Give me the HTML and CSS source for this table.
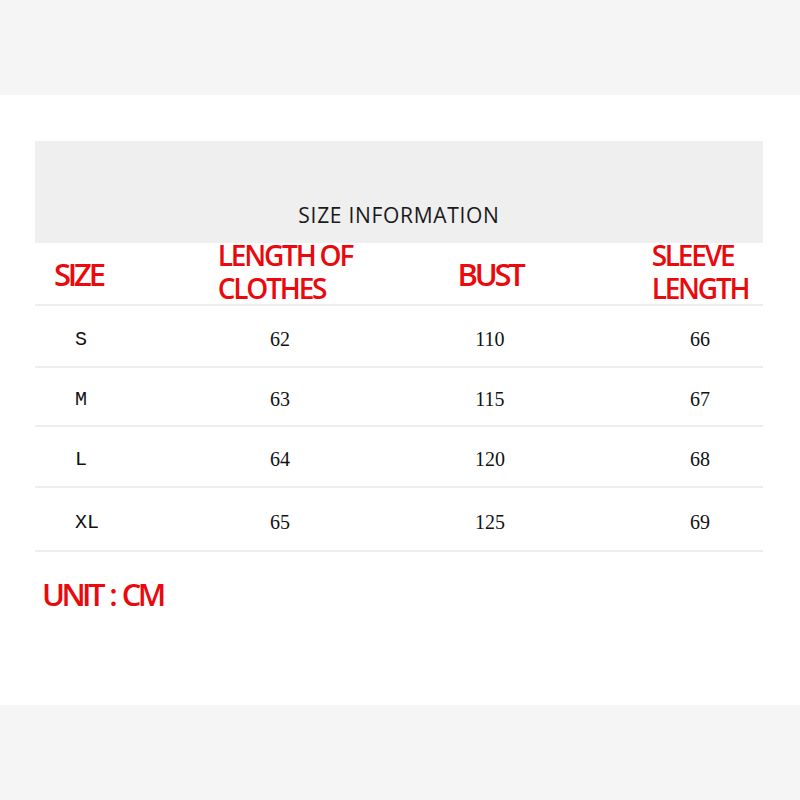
FILE: index.html
```html
<!DOCTYPE html>
<html>
<head>
<meta charset="utf-8">
<link rel="stylesheet" href="styles.css">
</head>
<body>
<div class="band"></div>
<main class="sheet">
  <div class="title">SIZE INFORMATION</div>
  <div class="table">
    <div class="row head">
      <div class="c c1"><span class="red big">SIZE</span></div>
      <div class="c c2"><span class="red two"><span class="ln">LENGTH OF</span><span class="ln">CLOTHES</span></span></div>
      <div class="c c3"><span class="red big">BUST</span></div>
      <div class="c c4"><span class="red two"><span class="ln">SLEEVE</span><span class="ln">LENGTH</span></span></div>
    </div>
    <div class="row body r1">
      <div class="c c1 sz">S</div><div class="c c2 num">62</div><div class="c c3 num">110</div><div class="c c4 num">66</div>
    </div>
    <div class="row body r2">
      <div class="c c1 sz">M</div><div class="c c2 num">63</div><div class="c c3 num">115</div><div class="c c4 num">67</div>
    </div>
    <div class="row body r3">
      <div class="c c1 sz">L</div><div class="c c2 num">64</div><div class="c c3 num">120</div><div class="c c4 num">68</div>
    </div>
    <div class="row body r4">
      <div class="c c1 sz">XL</div><div class="c c2 num">65</div><div class="c c3 num">125</div><div class="c c4 num">69</div>
    </div>
  </div>
  <div class="unit">UNIT : CM</div>
</main>
<div class="band"></div>
</body>
</html>
```

FILE: styles.css
```css
html, body {
  margin: 0;
  padding: 0;
  background: #ffffff;
}
body {
  width: 800px;
  height: 800px;
  overflow: hidden;
  display: flex;
  flex-direction: column;
}
.band {
  height: 95px;
  background: #f6f5f5;
}
.sheet {
  height: 610px;
  box-sizing: border-box;
  padding: 46px 37px 0 35px;
  background: #ffffff;
}
.title {
  height: 102px;
  background: #efefef;
  box-sizing: border-box;
  padding-top: 60px;
  text-align: center;
  font-family: "Open Sans", sans-serif;
  font-size: 21px;
  letter-spacing: 0.7px;
  line-height: 28px;
  color: #1a1a1a;
}
.table {
  display: flex;
  flex-direction: column;
}
.row {
  display: grid;
  grid-template-columns: 140px 210px 210px 168px;
  align-items: center;
  border-bottom: 2px solid #eeeeee;
  box-sizing: border-box;
}
.head { height: 63px; align-items: start; }
.body { padding-top: 6px; }
.r1 { height: 62px; }
.r2 { height: 59px; }
.r3 { height: 61px; }
.r4 { height: 64px; }
.c { text-align: center; }
.c1 { text-align: left; }
.c4 { padding-left: 42px; }
.head .c1 { padding-left: 19px; }
.red {
  display: inline-block;
  text-align: left;
  color: #ea0a0e;
  font-family: "Open Sans", sans-serif;
  font-weight: 600;
}
.big {
  font-size: 31px;
  letter-spacing: -3.2px;
  line-height: 36px;
  padding-top: 13px;
}
.two {
  font-size: 28px;
  letter-spacing: -2.2px;
  line-height: 33px;
  margin-top: -4px;
}
.ln { display: block; }
.c2 .two { margin-left: 10px; }
.sz {
  padding-left: 40px;
  font-family: "Liberation Mono", monospace;
  font-size: 20px;
  color: #111;
}
.num {
  font-family: "Liberation Serif", serif;
  font-size: 20px;
  color: #111;
}
.unit {
  margin: 22px 0 0 7px;
  color: #ea0a0e;
  font-family: "Open Sans", sans-serif;
  font-weight: 600;
  font-size: 31px;
  letter-spacing: -3.6px;
  word-spacing: 3px;
  line-height: 40px;
}
```
